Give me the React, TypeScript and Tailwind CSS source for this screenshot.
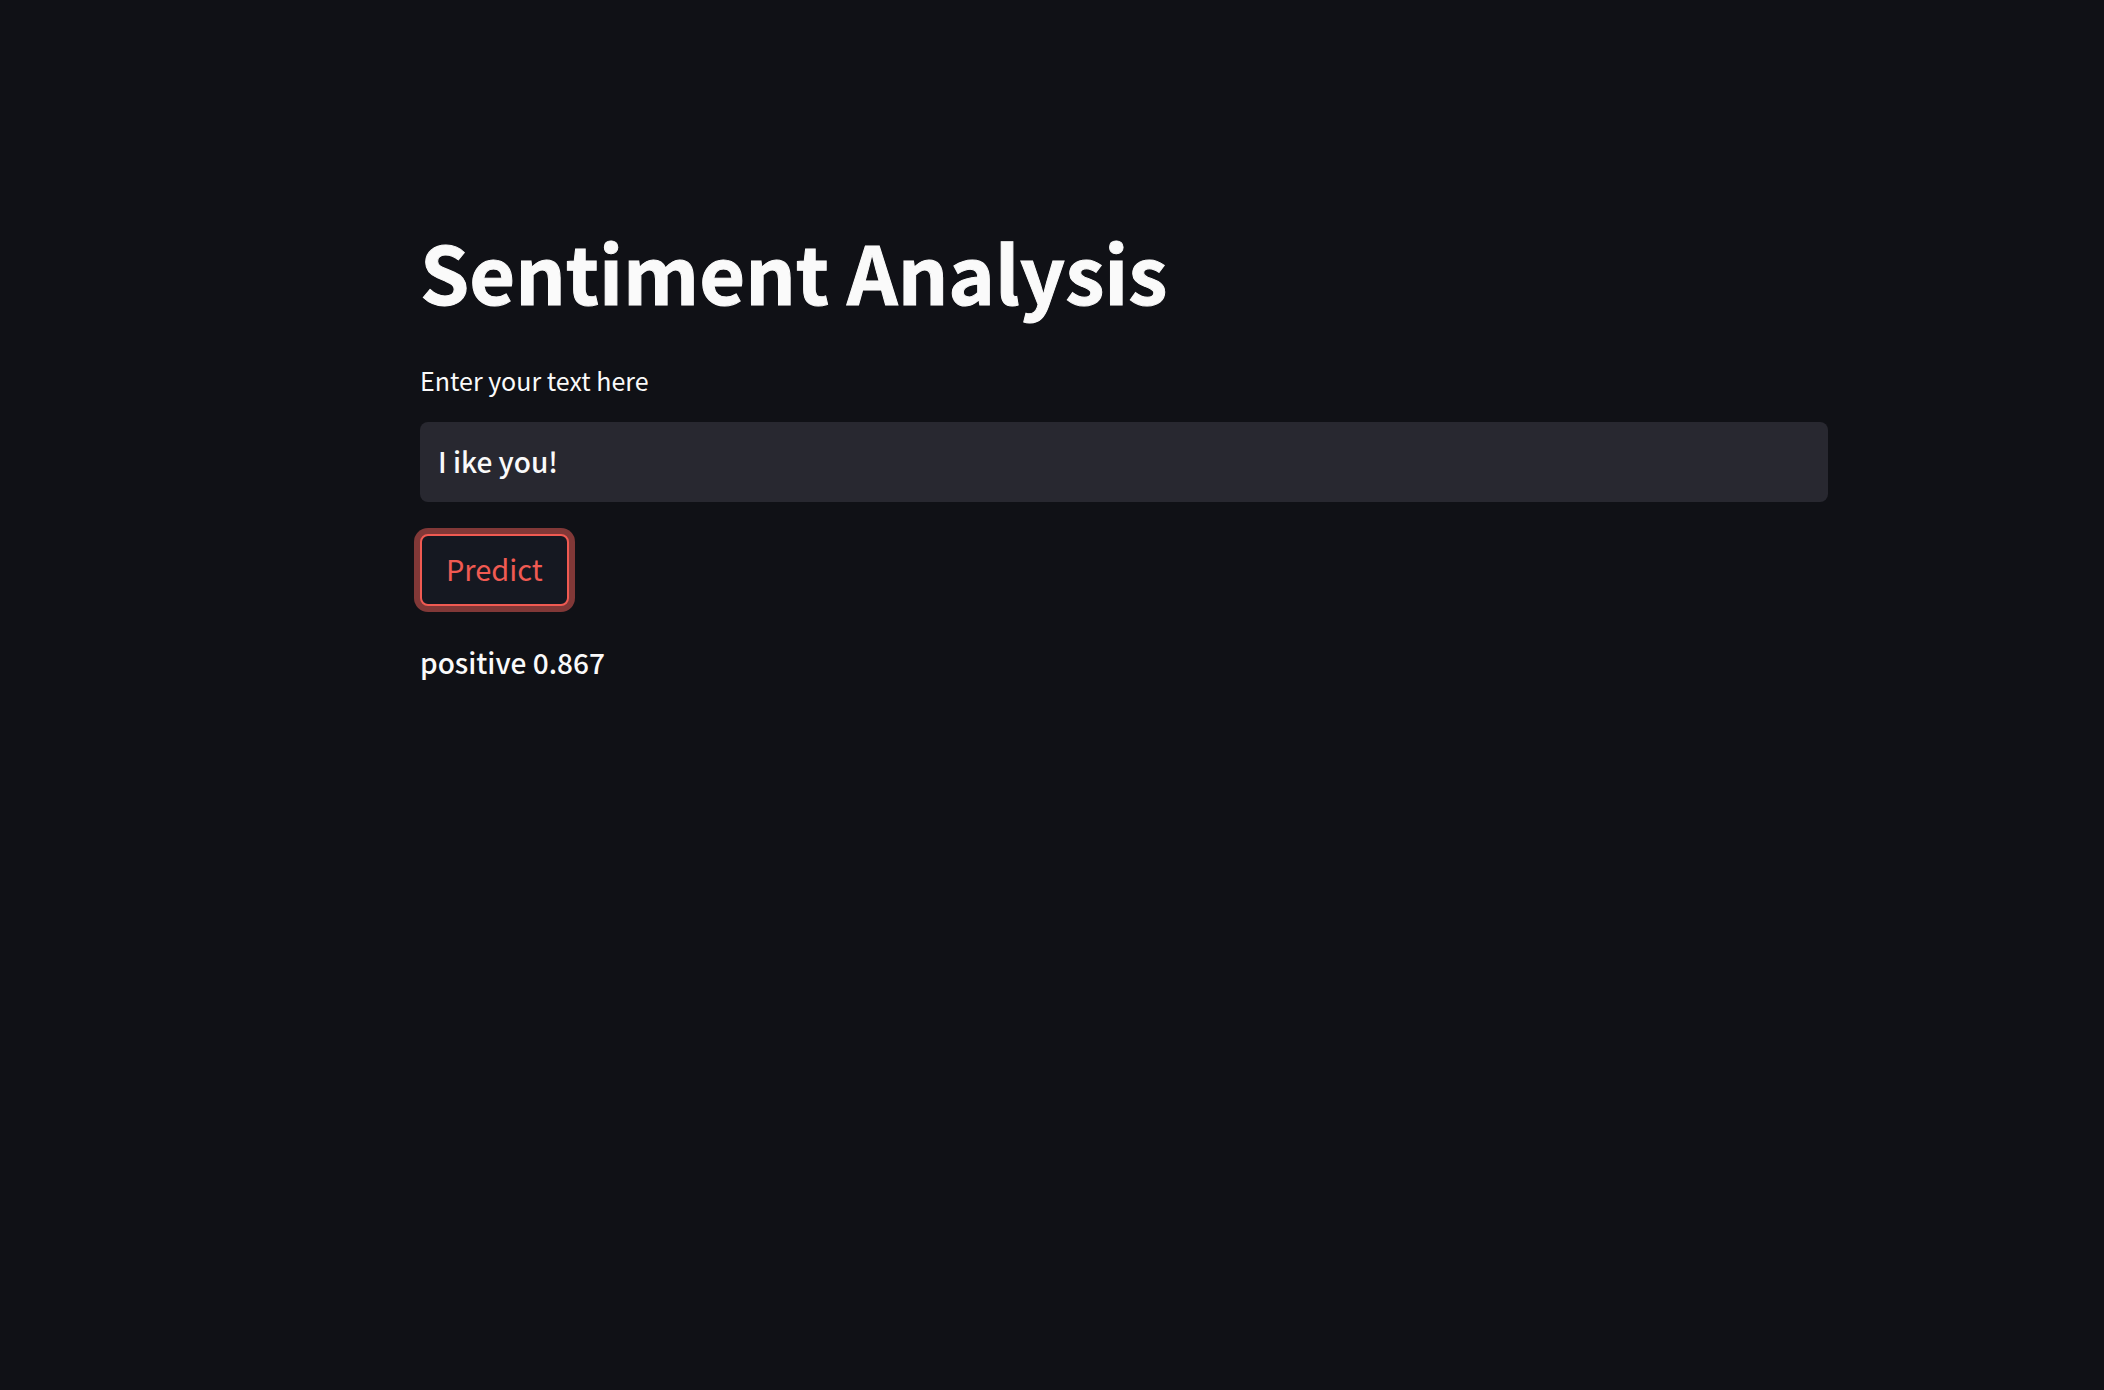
import { useState } from "react";
import type { FormEvent } from "react";

export default function App() {
  const [text, setText] = useState("I ike you!");

  function handleSubmit(event: FormEvent) {
    event.preventDefault();
  }

  return (
    <main className="min-h-screen bg-[#101116] pt-[222px] pr-[276px] pb-16 pl-[420px] font-['Noto_Sans_CJK_SC',sans-serif] text-[#fafafa]">
      <h1 className="text-[79px] leading-[97px] font-bold [-webkit-text-stroke:1px_#fafafa]">
        Sentiment Analysis
      </h1>
      <form onSubmit={handleSubmit} className="mt-10 flex flex-col items-start">
        <label htmlFor="text" className="text-[25px] leading-[42px]">
          Enter your text here
        </label>
        <input
          id="text"
          type="text"
          value={text}
          onChange={(event) => setText(event.target.value)}
          className="mt-[21px] h-20 w-full rounded-lg bg-[#282830] px-[18px] pb-0.5 text-[28px] font-medium outline-none"
        />
        <button
          type="submit"
          className="mt-8 h-[72px] rounded-lg border-2 border-[#f05a52] bg-[#151821] px-6 pb-1 text-[29px] leading-10 text-[#f05a52] ring-6 ring-[#813837]"
        >
          Predict
        </button>
      </form>
      <output htmlFor="text" className="mt-8 block text-[28px] leading-[48px] font-medium">
        positive 0.867
      </output>
    </main>
  );
}
